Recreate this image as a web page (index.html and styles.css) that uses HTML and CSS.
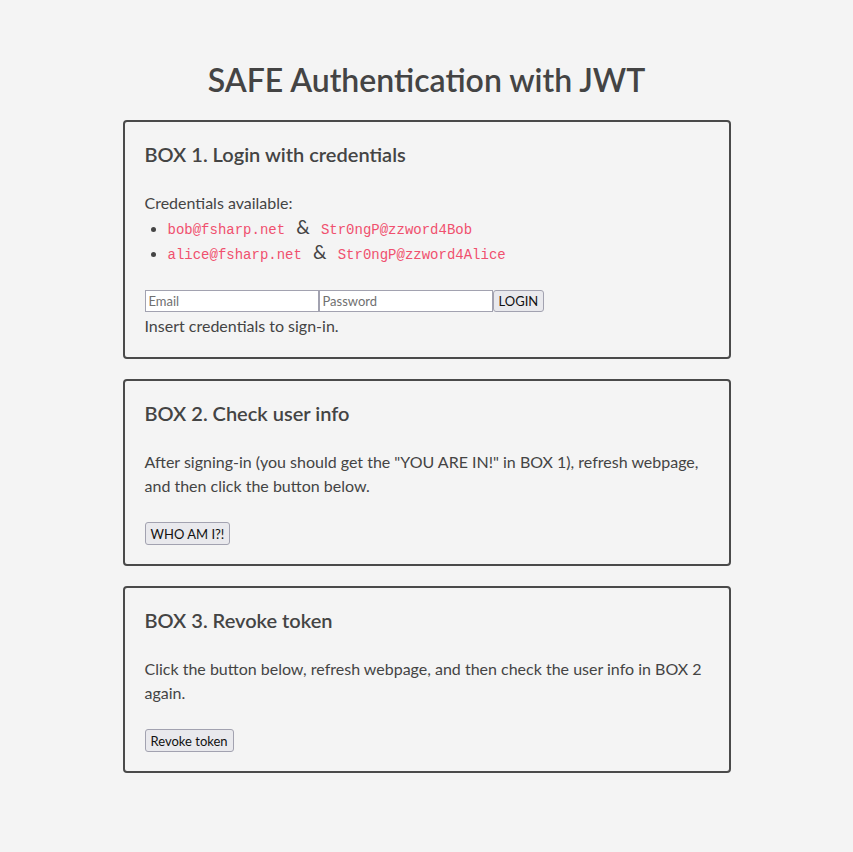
FILE: index.html
```html
<!DOCTYPE html>
<html lang="en">
<head>
<meta charset="utf-8">
<title>SAFE Authentication with JWT</title>
<link rel="stylesheet" href="styles.css">
</head>
<body>
<main class="page">
  <h1 class="title">SAFE Authentication with JWT</h1>

  <section class="box">
    <h2 class="box-title">BOX 1. Login with credentials</h2>
    <p class="text">Credentials available:</p>
    <ul class="creds">
      <li><code class="code">bob@fsharp.net</code> <span class="amp">&amp;</span> <code class="code">Str0ngP@zzword4Bob</code></li>
      <li><code class="code">alice@fsharp.net</code> <span class="amp">&amp;</span> <code class="code">Str0ngP@zzword4Alice</code></li>
    </ul>
    <form class="login">
      <input class="field" type="text" placeholder="Email"><input class="field" type="password" placeholder="Password"><button class="btn" type="button">LOGIN</button>
    </form>
    <p class="text status">Insert credentials to sign-in.</p>
  </section>

  <section class="box">
    <h2 class="box-title">BOX 2. Check user info</h2>
    <p class="text">After signing-in (you should get the "YOU ARE IN!" in BOX 1), refresh webpage, and then click the button below.</p>
    <button class="btn action" type="button">WHO AM I?!</button>
  </section>

  <section class="box">
    <h2 class="box-title">BOX 3. Revoke token</h2>
    <p class="text">Click the button below, refresh webpage, and then check the user info in BOX 2 again.</p>
    <button class="btn action" type="button">Revoke token</button>
  </section>
</main>
</body>
</html>
```

FILE: styles.css
```css
html, body {
  margin: 0;
  padding: 0;
  background: #f4f4f4;
}

body {
  font-family: Lato, "Open Sans", "Liberation Sans", sans-serif;
  color: #444444;
  font-size: 16px;
}

.page {
  width: 608px;
  margin: 0 auto;
  padding: 60px 0 40px;
  display: flex;
  flex-direction: column;
  gap: 20px;
}

.title {
  margin: 0;
  text-align: center;
  font-size: 32px;
  font-weight: 600;
  line-height: 40px;
  color: #444444;
}

.box {
  border: 2px solid #4a4a4a;
  border-radius: 4px;
  padding: 18px 20px 19px 20px;
  display: flex;
  flex-direction: column;
  align-items: flex-start;
}

.box-title {
  margin: 0 0 23px;
  font-size: 20px;
  font-weight: 600;
  line-height: 28px;
  color: #444444;
}

.text {
  margin: 0 0 24px;
  line-height: 24px;
}

.creds {
  margin: -24px 0 25px;
  padding-left: 23px;
}

.creds li {
  height: 25px;
  line-height: 25px;
}

.code {
  font-family: "Liberation Mono", "Courier New", monospace;
  font-size: 14px;
  line-height: 1;
  color: #f0506e;
}

.amp {
  padding: 0 7px;
  font-size: 19px;
  line-height: 1;
}

.login {
  display: flex;
  margin: 0 0 2px;
}

.field {
  width: 174px;
  height: 22px;
  box-sizing: border-box;
  margin: 0;
  padding: 1px 3px;
  border: 1px solid #a2a2b0;
  border-radius: 0;
  background: #ffffff;
  font-family: Lato, "Liberation Sans", sans-serif;
  font-size: 13px;
  color: #222;
}

.field::placeholder {
  color: #707070;
}

.btn {
  height: 22px;
  box-sizing: border-box;
  margin: 0;
  padding: 0 5px;
  border: 1px solid #a2a2b0;
  border-radius: 3px;
  background: #e9e9ed;
  font-family: Lato, "Liberation Sans", sans-serif;
  font-size: 13px;
  color: #111;
}

.action {
  height: 23px;
}

.status {
  margin: 0;
}
```
